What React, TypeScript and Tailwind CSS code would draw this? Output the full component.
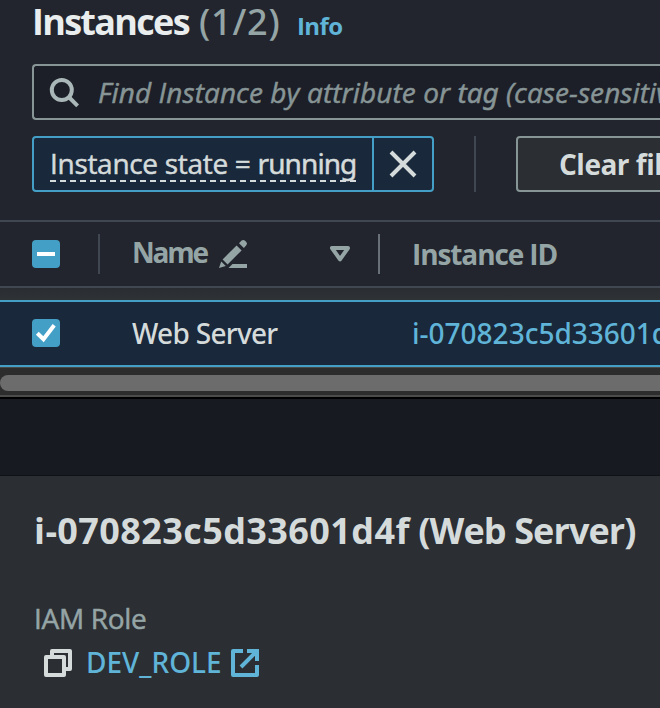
import React from "react";

const openSans = "font-['Open_Sans','Noto_Sans',sans-serif]";
const notoSans = "font-['Noto_Sans','Open_Sans',sans-serif]";
// Open Sans has no medium cut, so a thin stroke gives the text its weight.
const sturdy = "[-webkit-text-stroke:0.5px_currentColor]";

function SearchIcon() {
  return (
    <svg width="32" height="32" viewBox="0 0 32 32" fill="none" stroke="#aab7b8" strokeWidth="4" className="shrink-0">
      <circle cx="13.8" cy="14" r="10" />
      <path d="M20.8 21l8.8 8.8" />
    </svg>
  );
}

function CloseIcon() {
  return (
    <svg width="32" height="32" viewBox="0 0 32 32" fill="none" stroke="#d5dbdb" strokeWidth="4">
      <path d="M4 4l24 24M28 4L4 28" />
    </svg>
  );
}

function PencilIcon() {
  return (
    <svg width="30" height="30" viewBox="0 0 30 30" fill="#95a5a6" className="shrink-0">
      <path d="M1 29l2.200-6.600 4.600 4.600z" />
      <path d="M4.600 20.400L18.600 6.400l5 5L9.600 25.400z" />
      <path d="M21 4.200l2.600-2.600Q25.200.2 26.800 1.600l1.500 1.500q1.500 1.600 0 3.200L25.900 8.900z" />
      <path d="M14.500 25H29v4H10.500z" />
    </svg>
  );
}

function SortIcon() {
  return (
    <svg width="20" height="16" viewBox="0 0 20 16" fill="none" stroke="#95a5a6" strokeWidth="4" strokeLinejoin="round" className="shrink-0">
      <path d="M2 2h16L10 13.400z" />
    </svg>
  );
}

function CopyIcon() {
  return (
    <svg width="28" height="28" viewBox="0 0 28 28" fill="none" stroke="#d5dbdb" strokeWidth="4" strokeLinejoin="round" className="shrink-0">
      <path d="M2 8h18v18H2z" />
      <path d="M8 6V2h18v18h-4" />
    </svg>
  );
}

function ExternalIcon() {
  return (
    <svg width="28" height="28" viewBox="0 0 28 28" fill="none" stroke="#5fb4d8" strokeWidth="4" className="shrink-0">
      <path d="M12 2H2v24h24V16" strokeLinejoin="round" />
      <path d="M16 2h10v10M25 3L10 18" />
    </svg>
  );
}

function Checkbox({ mixed = false }: { mixed?: boolean }) {
  return (
    <span className="flex size-7 shrink-0 items-center justify-center rounded-[4px] bg-[#449fc7]">
      <svg width="28" height="28" viewBox="0 0 28 28" fill="none" stroke="#fff" strokeWidth="4">
        {mixed ? <path d="M5 14h18" /> : <path d="M5.3 14.2l6.2 6L22.2 6.2" />}
      </svg>
    </span>
  );
}

export default function App() {
  return (
    <main className={`h-[708px] w-[660px] overflow-hidden bg-[#171a21] whitespace-nowrap text-[28px] leading-9 text-[#d5dbdb] ${openSans}`}>
      <section className="h-[397px] border-b-2 border-[#4c4c4c] bg-[#22252d]">
        <header className="flex h-16 items-baseline pt-[4px] pl-8">
          <h1 className="w-[167px] text-[36px] font-bold tracking-[-1.7px] text-[#eaeded]">Instances</h1>
          <span className={`w-[98px] text-[36px] font-medium tracking-[0.8px] text-[#95a5a6] ${notoSans}`}>(1/2)</span>
          <a className="text-[24px] font-bold tracking-[-0.6px] text-[#5fb4d8]">Info</a>
        </header>

        <div className="ml-8 flex h-14 items-center overflow-hidden rounded-l-[4px] border-2 border-r-0 border-[#879596] bg-[#1c1f27] pl-3.5">
          <SearchIcon />
          <span className={`ml-[18px] tracking-[0.1px] text-[#879596] italic ${sturdy}`}>
            Find Instance by attribute or <span className={`tracking-[-0.1px] ${notoSans}`}>tag</span> (case-sensitive)
          </span>
        </div>

        <div className="mt-4 ml-8 flex h-14">
          <div className="flex w-[402px] shrink-0 rounded-[4px] border-2 border-[#449fc7] bg-[#19283a]">
            <div className="w-[340px] border-r-2 border-[#449fc7] pt-[7px] pl-4">
              <span className={`block h-[37px] w-[306px] border-b-2 border-dashed border-[#d5dbdb] tracking-[-0.3px] ${sturdy}`}>
                Instance state = <span className={`tracking-[-0.9px] ${notoSans}`}>running</span>
              </span>
            </div>
            <div className="flex flex-1 items-center justify-center">
              <CloseIcon />
            </div>
          </div>
          <div className="ml-10 w-0.5 shrink-0 bg-[#414750]" />
          <button className="ml-10 flex w-[200px] shrink-0 items-center rounded-[4px] border-2 border-[#879596] bg-[#2b2e33] pl-[41px] font-bold tracking-[-0.5px]">
            Clear filters
          </button>
        </div>

        <div className="mt-7 flex h-[68px] items-center border-y-2 border-[#414750] pl-8 font-bold text-[#95a5a6]">
          <Checkbox mixed />
          <div className="ml-[38px] h-10 w-0.5 bg-[#414750]" />
          <span className="mb-[5px] ml-8 w-[86px] tracking-[-2.2px]">Name</span>
          <PencilIcon />
          <span className="ml-[82px]"><SortIcon /></span>
          <div className="ml-7 h-10 w-0.5 bg-[#687078]" />
          <span className="ml-8 tracking-[-1.1px]">Instance ID</span>
        </div>

        <div className="h-3 bg-gradient-to-b from-[#292c31] to-[#2f3235]" />
        <div className={`flex h-[67px] items-center border-y-2 border-[#449fc7] bg-[#19283a] pb-px pl-8 font-medium ${notoSans}`}>
          <Checkbox />
          <span className="ml-[72px] w-[280px] shrink-0 tracking-[-0.7px]">Web Server</span>
          <a className="text-[#5fb4d8]">i-070823c5d33601d4f</a>
        </div>
        <div className="h-7 border-t border-[#494949] bg-[#2d2d2d] pt-[7px]">
          <div className="h-4 rounded-l-full bg-[#6c6c6c]" />
        </div>
      </section>

      <div className="h-[79px] border-t-2 border-b border-t-black border-b-[#111216]" />

      <section className="h-[232px] bg-[#2b2e33] pt-[37px] pl-[34px]">
        <h2 className="text-[36px] font-bold tracking-[-0.9px]">
          <span className="tracking-[0.4px]">i-070823c5d33601d4f</span> (Web Server)
        </h2>
        <div className={`mt-[51px] tracking-[-0.3px] text-[#95a5a6] ${sturdy}`}>IAM Role</div>
        <div className="mt-[9px] flex h-9 items-center pl-2.5">
          <CopyIcon />
          <a className={`mb-0.5 ml-3.5 w-[145px] font-medium text-[#5fb4d8] ${notoSans}`}>DEV_ROLE</a>
          <ExternalIcon />
        </div>
      </section>
    </main>
  );
}
